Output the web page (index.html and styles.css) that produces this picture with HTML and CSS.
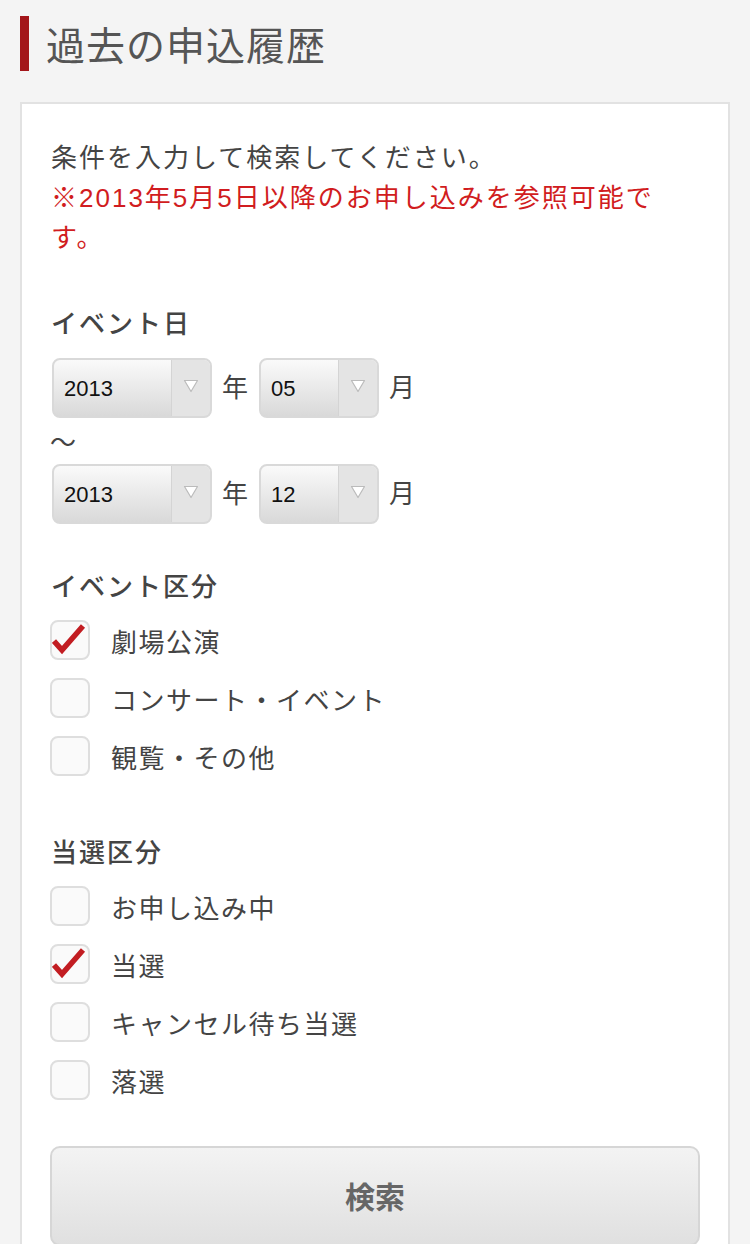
FILE: index.html
```html
<!DOCTYPE html>
<html lang="ja">
<head>
    <meta charset="UTF-8">
    <meta name="viewport" content="width=device-width, initial-scale=1.0">
    <title>過去の申込履歴</title>
    <link rel="stylesheet" href="styles.css">
</head>
<body>
    <h1 class="page-title">過去の申込履歴</h1>

    <div class="card">
        <p class="lead">条件を入力して検索してください。</p>
        <p class="notice">※2013年5月5日以降のお申し込みを参照可能です。</p>

        <h2 class="heading">イベント日</h2>
        <div class="date-row">
            <div class="select year">
                <select><option>2013</option></select>
                <span class="arrow"><svg width="16" height="14" viewBox="0 0 16 14"><path d="M1.5 1.5 H14.5 L8 12.5 Z" fill="#fff" stroke="#bbb" stroke-width="1.2" stroke-linejoin="round"/></svg></span>
            </div>
            <span class="unit">年</span>
            <div class="select month">
                <select><option>05</option></select>
                <span class="arrow"><svg width="16" height="14" viewBox="0 0 16 14"><path d="M1.5 1.5 H14.5 L8 12.5 Z" fill="#fff" stroke="#bbb" stroke-width="1.2" stroke-linejoin="round"/></svg></span>
            </div>
            <span class="unit">月</span>
        </div>
        <div class="tilde">～</div>
        <div class="date-row">
            <div class="select year">
                <select><option>2013</option></select>
                <span class="arrow"><svg width="16" height="14" viewBox="0 0 16 14"><path d="M1.5 1.5 H14.5 L8 12.5 Z" fill="#fff" stroke="#bbb" stroke-width="1.2" stroke-linejoin="round"/></svg></span>
            </div>
            <span class="unit">年</span>
            <div class="select month">
                <select><option>12</option></select>
                <span class="arrow"><svg width="16" height="14" viewBox="0 0 16 14"><path d="M1.5 1.5 H14.5 L8 12.5 Z" fill="#fff" stroke="#bbb" stroke-width="1.2" stroke-linejoin="round"/></svg></span>
            </div>
            <span class="unit">月</span>
        </div>

        <h2 class="heading heading-type">イベント区分</h2>
        <ul class="checks">
            <li class="check"><span class="box"><svg width="36" height="36" viewBox="0 0 36 36"><polyline points="2,19 10,28 31,4" fill="none" stroke="#c21d22" stroke-width="5.5"/></svg></span>劇場公演</li>
            <li class="check"><span class="box"></span>コンサート・イベント</li>
            <li class="check"><span class="box"></span>観覧・その他</li>
        </ul>

        <h2 class="heading heading-result">当選区分</h2>
        <ul class="checks">
            <li class="check"><span class="box"></span>お申し込み中</li>
            <li class="check"><span class="box"><svg width="36" height="36" viewBox="0 0 36 36"><polyline points="2,19 10,28 31,4" fill="none" stroke="#c21d22" stroke-width="5.5"/></svg></span>当選</li>
            <li class="check"><span class="box"></span>キャンセル待ち当選</li>
            <li class="check"><span class="box"></span>落選</li>
        </ul>

        <button class="search">検索</button>
    </div>
</body>
</html>
```

FILE: styles.css
```css
html {
    overflow: hidden;
}

body {
    margin: 0;
    background: #f4f4f4;
    font-family: "Noto Sans CJK JP", "Noto Sans", sans-serif;
    color: #444;
}

.page-title {
    margin: 16px 0 0 20px;
    height: 55px;
    line-height: 55px;
    padding-left: 17px;
    border-left: 9px solid #a3161a;
    font-size: 39px;
    font-weight: normal;
    letter-spacing: 1px;
    color: #555;
}

.card {
    margin: 31px 20px 0;
    background: #fff;
    border: 2px solid #e2e2e2;
    border-bottom: none;
    padding: 34px 28px 0;
    height: 1106px;
}

.lead,
.notice {
    margin: 0;
    font-family: "Liberation Sans", "Noto Sans CJK JP", sans-serif;
    font-size: 26px;
    line-height: 40px;
    letter-spacing: 2px;
    padding-left: 1px;
}

.lead {
    color: #444;
}

.notice {
    color: #d11c20;
}

.heading {
    margin: 44px 0 0;
    padding-left: 1px;
    font-size: 26px;
    line-height: 40px;
    font-weight: 500;
    letter-spacing: 2px;
    color: #444;
}

.date-row {
    display: flex;
    align-items: center;
    margin-top: 16px;
    padding-left: 2px;
}

.date-row + .tilde + .date-row {
    margin-top: 0;
}

.tilde {
    height: 46px;
    line-height: 46px;
    font-size: 26px;
    color: #444;
}

.select {
    display: flex;
    height: 56px;
    border: 2px solid #d9d9d9;
    border-radius: 8px;
    overflow: hidden;
    background: linear-gradient(#fafafa, #d9d9d9);
}

.select.year {
    width: 156px;
}

.select.month {
    width: 116px;
}

.select select {
    flex: 1;
    min-width: 0;
    appearance: none;
    -webkit-appearance: none;
    border: none;
    background: transparent;
    padding: 0 0 0 10px;
    font-family: "Liberation Sans", Arial, sans-serif;
    font-size: 22px;
    color: #111;
    outline: none;
}

.arrow {
    width: 38px;
    display: flex;
    align-items: center;
    justify-content: center;
    background: #e4e4e4;
    border-left: 1px solid #d4d4d4;
    padding-bottom: 4px;
}

.unit {
    font-size: 26px;
    margin: 0 11px 0 10px;
    padding-bottom: 6px;
    color: #444;
}

.heading-type {
    margin-top: 41px;
}

.heading-result {
    margin-top: 46px;
}

.checks {
    list-style: none;
    margin: 6px 0 0;
    padding: 0;
}

.check {
    display: flex;
    align-items: center;
    height: 58px;
    font-size: 26px;
    letter-spacing: 1.5px;
    color: #444;
}

.box {
    width: 36px;
    height: 36px;
    border: 2px solid #dedede;
    border-radius: 8px;
    background: #fafafa;
    margin-right: 21px;
    flex-shrink: 0;
}

.box svg {
    display: block;
}

.search {
    display: block;
    width: 100%;
    height: 100px;
    margin-top: 37px;
    border: 2px solid #d6d6d6;
    border-radius: 10px;
    background: linear-gradient(#f3f3f3, #e0e0e0);
    font-family: "Noto Sans CJK JP", sans-serif;
    font-size: 30px;
    font-weight: bold;
    color: #666;
    padding-bottom: 4px;
}
```
